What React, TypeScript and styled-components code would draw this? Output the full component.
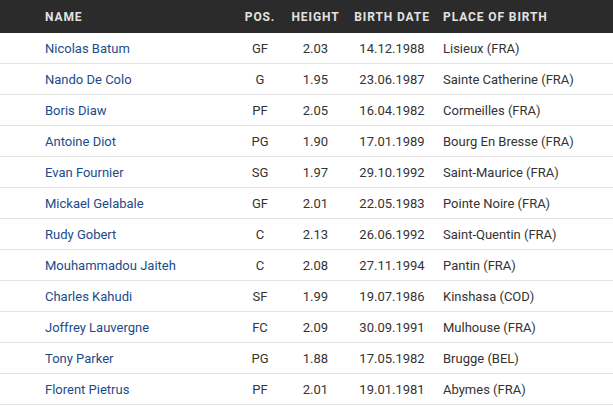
import styled, { createGlobalStyle } from "styled-components";

const GlobalStyle = createGlobalStyle`
	body {
		margin: 0;
		background: #fff;
		font-family: Roboto, "Liberation Sans", Arial, sans-serif;
	}
`

const players = [
	{ name: "Nicolas Batum", pos: "GF", height: "2.03", born: "14.12.1988", place: "Lisieux (FRA)" },
	{ name: "Nando De Colo", pos: "G", height: "1.95", born: "23.06.1987", place: "Sainte Catherine (FRA)" },
	{ name: "Boris Diaw", pos: "PF", height: "2.05", born: "16.04.1982", place: "Cormeilles (FRA)" },
	{ name: "Antoine Diot", pos: "PG", height: "1.90", born: "17.01.1989", place: "Bourg En Bresse (FRA)" },
	{ name: "Evan Fournier", pos: "SG", height: "1.97", born: "29.10.1992", place: "Saint-Maurice (FRA)" },
	{ name: "Mickael Gelabale", pos: "GF", height: "2.01", born: "22.05.1983", place: "Pointe Noire (FRA)" },
	{ name: "Rudy Gobert", pos: "C", height: "2.13", born: "26.06.1992", place: "Saint-Quentin (FRA)" },
	{ name: "Mouhammadou Jaiteh", pos: "C", height: "2.08", born: "27.11.1994", place: "Pantin (FRA)" },
	{ name: "Charles Kahudi", pos: "SF", height: "1.99", born: "19.07.1986", place: "Kinshasa (COD)" },
	{ name: "Joffrey Lauvergne", pos: "FC", height: "2.09", born: "30.09.1991", place: "Mulhouse (FRA)" },
	{ name: "Tony Parker", pos: "PG", height: "1.88", born: "17.05.1982", place: "Brugge (BEL)" },
	{ name: "Florent Pietrus", pos: "PF", height: "2.01", born: "19.01.1981", place: "Abymes (FRA)" },
]

export default function App() {
	return (
		<>
			<GlobalStyle />
			<Roster>
				<HeaderRow>
					<HeadCell>Name</HeadCell>
					<HeadCell $align="center">Pos.</HeadCell>
					<HeadCell $align="center">Height</HeadCell>
					<HeadCell $align="center">Birth Date</HeadCell>
					<HeadCell $pad={7}>Place of Birth</HeadCell>
				</HeaderRow>
				{players.map((p) => (
					<Row key={p.name}>
						<NameLink href="#">{p.name}</NameLink>
						<Cell $align="center">{p.pos}</Cell>
						<Cell $align="center">{p.height}</Cell>
						<Cell $align="center">{p.born}</Cell>
						<Cell $pad={7}>{p.place}</Cell>
					</Row>
				))}
			</Roster>
		</>
	)
}

const Roster = styled.div`
	width: 613px;
	display: flex;
	flex-direction: column;
`

const grid = `
	display: grid;
	grid-template-columns: 192px 46px 65px 88px 1fr;
	align-items: center;
	padding-left: 45px;
`

const HeaderRow = styled.div`
	${grid}
	height: 33px;
	background: #2b2b2b;
`

const Row = styled.div`
	${grid}
	height: 30px;
	border-bottom: 1px solid #e3e3e3;
`

const HeadCell = styled.div<{ $align?: string; $pad?: number }>`
	text-align: ${(p) => p.$align || "left"};
	padding-left: ${(p) => p.$pad || 0}px;
	color: #e2e2e2;
	font-size: 12px;
	font-weight: 700;
	letter-spacing: 0.9px;
	text-transform: uppercase;
	white-space: nowrap;
`

const Cell = styled.div<{ $align?: string; $pad?: number }>`
	text-align: ${(p) => p.$align || "left"};
	padding-left: ${(p) => p.$pad || 0}px;
	color: #333;
	font-size: 13px;
	white-space: nowrap;
`

const NameLink = styled.a`
	color: #1c4b8c;
	font-size: 13px;
	text-decoration: none;
	white-space: nowrap;
`
